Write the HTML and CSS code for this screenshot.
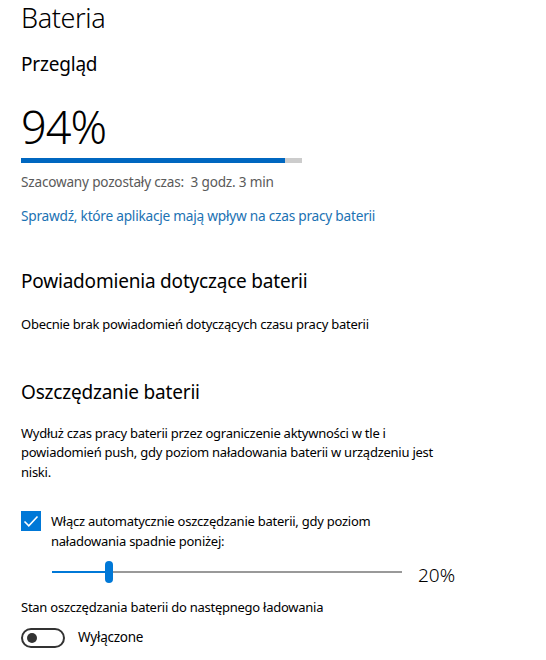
FILE: index.html
```html
<!DOCTYPE html>
<html lang="pl">
<head>
<meta charset="utf-8">
<link rel="stylesheet" href="styles.css">
</head>
<body>
<div class="page">
  <h1 class="title">Bateria</h1>
  <h2 class="sub">Przegląd</h2>
  <div class="pct">94%</div>
  <div class="bar"><div class="bar-fill" style="width:94%"></div></div>
  <p class="remain">Szacowany pozostały czas:&nbsp; 3 godz. 3 min</p>
  <a class="link" href="#">Sprawdź, które aplikacje mają wpływ na czas pracy baterii</a>

  <h2 class="section">Powiadomienia dotyczące baterii</h2>
  <p class="text">Obecnie brak powiadomień dotyczących czasu pracy baterii</p>

  <h2 class="section section2">Oszczędzanie baterii</h2>
  <p class="text para">Wydłuż czas pracy baterii przez ograniczenie aktywności w tle i powiadomień push, gdy poziom naładowania baterii w urządzeniu jest niski.</p>

  <div class="check-row">
    <span class="checkbox">
      <svg width="20" height="20" viewBox="0 0 20 20"><path d="M3.5 10.5 L7.8 14.8 L16.5 5.5" fill="none" stroke="#fff" stroke-width="1.6"/></svg>
    </span>
    <span class="check-label">Włącz automatycznie oszczędzanie baterii, gdy poziom naładowania spadnie poniżej:</span>
  </div>

  <div class="slider-row">
    <div class="slider">
      <div class="slider-fill"></div>
      <div class="slider-thumb"></div>
    </div>
    <span class="slider-val">20%</span>
  </div>

  <p class="text state">Stan oszczędzania baterii do następnego ładowania</p>
  <div class="toggle-row">
    <span class="toggle"><span class="knob"></span></span>
    <span class="toggle-label">Wyłączone</span>
  </div>
</div>
</body>
</html>
```
FILE: styles.css
```css
* { box-sizing: border-box; }
html, body { margin: 0; padding: 0; background: #fff; }
body {
  font-family: "Noto Sans", "Open Sans", sans-serif;
  color: #000;
  width: 546px;
  height: 660px;
  overflow: hidden;
}
.page { padding: 0 0 0 21px; }
.title {
  margin: 0;
  font-weight: 300;
  font-size: 27px;
  line-height: 36px;
  letter-spacing: -0.4px;
}
.sub {
  margin: 14px 0 0 0;
  font-weight: 400;
  font-size: 19px;
  line-height: 28px;
  letter-spacing: -0.2px;
}
.pct {
  margin-top: 24px;
  font-weight: 300;
  font-size: 45px;
  line-height: 50px;
  letter-spacing: -1px;
}
.bar {
  margin-top: 6px;
  width: 281px;
  height: 5px;
  background: #ccc;
}
.bar-fill { height: 100%; background: #0067c0; }
.remain {
  margin: 10px 0 0 0;
  font-size: 13.6px;
  line-height: 18px;
  color: #5a5a5a;
  letter-spacing: -0.2px;
}
.link {
  display: block;
  margin-top: 16px;
  font-size: 13.7px;
  line-height: 18px;
  color: #1b72b3;
  text-decoration: none;
  letter-spacing: -0.25px;
}
.section {
  margin: 42px 0 0 0;
  font-weight: 400;
  font-size: 19px;
  line-height: 28px;
  letter-spacing: -0.2px;
}
.section2 { margin-top: 43px; }
.text {
  margin: 20px 0 0 0;
  font-size: 13px;
  line-height: 19.5px;
  letter-spacing: -0.25px;
}
.para { width: 440px; margin-top: 18px; }
.check-row {
  display: flex;
  align-items: flex-start;
  gap: 10px;
  margin-top: 29px;
}
.checkbox {
  width: 20px;
  height: 20px;
  background: #0078d7;
  flex: none;
  display: flex;
}
.check-label {
  font-size: 13px;
  line-height: 19.5px;
  letter-spacing: -0.25px;
  width: 360px;
  margin-top: 1px;
}
.slider-row {
  display: flex;
  align-items: center;
  margin-top: 6px;
  padding-left: 31px;
}
.slider {
  position: relative;
  width: 350px;
  height: 24px;
  background: linear-gradient(#999, #999) center / 100% 2px no-repeat;
}
.slider-fill {
  position: absolute;
  left: 0;
  top: 11px;
  width: 56px;
  height: 2px;
  background: #0078d7;
}
.slider-thumb {
  position: absolute;
  left: 53px;
  top: 1px;
  width: 8px;
  height: 22px;
  border-radius: 4px;
  background: #0078d7;
}
.slider-val {
  margin-left: 16px;
  font-size: 19px;
  font-weight: 300;
  line-height: 24px;
  margin-top: 6px;
}
.state { margin-top: 11px; }
.toggle-row {
  display: flex;
  align-items: center;
  gap: 13px;
  margin-top: 10px;
}
.toggle {
  position: relative;
  width: 44px;
  height: 20px;
  border: 2px solid #333;
  border-radius: 10px;
  flex: none;
}
.knob {
  position: absolute;
  left: 4px;
  top: 3px;
  width: 10px;
  height: 10px;
  border-radius: 50%;
  background: #333;
}
.toggle-label {
  font-size: 13.5px;
  line-height: 19px;
  letter-spacing: -0.25px;
}
```
